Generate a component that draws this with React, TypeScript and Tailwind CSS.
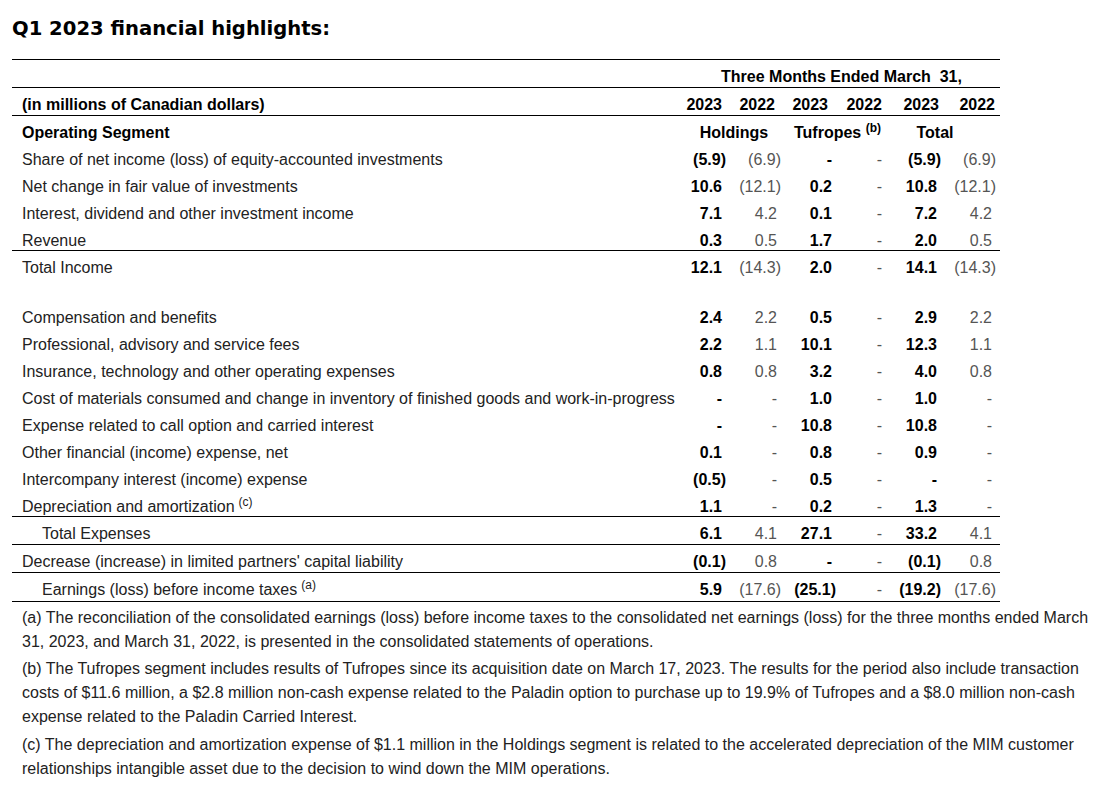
import React from "react";

type RowType = {
    label: string;
    sup?: string;
    indent?: boolean;
    vals: string[];
    cls: string;
};

const grid = "grid grid-cols-[671px_47px_55px_55px_50px_55px_55px] pt-[5px]";

const rows: RowType[] = [
    { label: "Share of net income (loss) of equity-accounted investments", vals: ["(5.9)", "(6.9)", "-", "-", "(5.9)", "(6.9)"], cls: "h-[27px]" },
    { label: "Net change in fair value of investments", vals: ["10.6", "(12.1)", "0.2", "-", "10.8", "(12.1)"], cls: "h-[27px]" },
    { label: "Interest, dividend and other investment income", vals: ["7.1", "4.2", "0.1", "-", "7.2", "4.2"], cls: "h-[27px]" },
    { label: "Revenue", vals: ["0.3", "0.5", "1.7", "-", "2.0", "0.5"], cls: "h-[27px] border-b border-black" },
    { label: "Total Income", vals: ["12.1", "(14.3)", "2.0", "-", "14.1", "(14.3)"], cls: "h-[28px] mb-[22px]" },
    { label: "Compensation and benefits", vals: ["2.4", "2.2", "0.5", "-", "2.9", "2.2"], cls: "h-[27px]" },
    { label: "Professional, advisory and service fees", vals: ["2.2", "1.1", "10.1", "-", "12.3", "1.1"], cls: "h-[27px]" },
    { label: "Insurance, technology and other operating expenses", vals: ["0.8", "0.8", "3.2", "-", "4.0", "0.8"], cls: "h-[27px]" },
    { label: "Cost of materials consumed and change in inventory of finished goods and work-in-progress", vals: ["-", "-", "1.0", "-", "1.0", "-"], cls: "h-[27px]" },
    { label: "Expense related to call option and carried interest", vals: ["-", "-", "10.8", "-", "10.8", "-"], cls: "h-[27px]" },
    { label: "Other financial (income) expense, net", vals: ["0.1", "-", "0.8", "-", "0.9", "-"], cls: "h-[27px]" },
    { label: "Intercompany interest (income) expense", vals: ["(0.5)", "-", "0.5", "-", "-", "-"], cls: "h-[27px]" },
    { label: "Depreciation and amortization", sup: "(c)", vals: ["1.1", "-", "0.2", "-", "1.3", "-"], cls: "h-[27px] border-b border-black" },
    { label: "Total Expenses", indent: true, vals: ["6.1", "4.1", "27.1", "-", "33.2", "4.1"], cls: "h-[28px] border-b border-black" },
    { label: "Decrease (increase) in limited partners' capital liability", vals: ["(0.1)", "0.8", "-", "-", "(0.1)", "0.8"], cls: "h-[28px] border-b border-black" },
    { label: "Earnings (loss) before income taxes", sup: "(a)", indent: true, vals: ["5.9", "(17.6)", "(25.1)", "-", "(19.2)", "(17.6)"], cls: "h-[29px] border-b border-black" },
];

const years = [
    { y: "2023", pr: "pr-[8px]" },
    { y: "2022", pr: "pr-[10px]" },
    { y: "2023", pr: "pr-[12px]" },
    { y: "2022", pr: "pr-[8px]" },
    { y: "2023", pr: "pr-[6px]" },
    { y: "2022", pr: "pr-[5px]" },
];

const Value: React.FC<{ v: string; i: number }> = ({ v, i }) => {
    const bold = i % 2 === 0;
    const paren = v.endsWith(")");
    return (
        <div
            className={`flex items-center justify-end pr-[4px] ${
                bold ? "font-bold text-black" : "text-[#555]"
            }`}
        >
            <span className={paren ? "" : "pr-[4px]"}>{v}</span>
        </div>
    );
};

const App: React.FC = () => {
    return (
        <div className="min-h-screen bg-white font-['Liberation_Sans',Arial,sans-serif] text-[16px] text-[#222]">
            <div className="h-[59px] pl-[12px] pt-[15px]">
                <h1 className="font-['DejaVu_Sans',Verdana,sans-serif] text-[19.6px] font-bold leading-[28px] text-black">
                    Q1 2023 financial highlights:
                </h1>
            </div>

            <div className="ml-[12px] w-[988px]">
                <div className={`${grid} h-[29px] border-y border-black`}>
                    <div />
                    <div className="col-span-6 flex items-center justify-center font-bold text-black">
                        Three Months Ended March&nbsp; 31,
                    </div>
                </div>
                <div className={`${grid} h-[28px] border-b border-black font-bold text-black`}>
                    <div className="flex items-center pl-[10px]">(in millions of Canadian dollars)</div>
                    {years.map((item, key) => (
                        <div className={`flex items-center justify-end ${item.pr}`} key={key}>
                            {item.y}
                        </div>
                    ))}
                </div>
                <div className={`${grid} h-[27px] font-bold text-black`}>
                    <div className="flex items-center pl-[10px]">Operating Segment</div>
                    <div className="col-span-2 flex items-center justify-center">Holdings</div>
                    <div className="col-span-2 flex items-center justify-center">
                        <span>
                            Tufropes <sup className="text-[12px] font-bold">(b)</sup>
                        </span>
                    </div>
                    <div className="col-span-2 flex items-center justify-center pr-[20px]">Total</div>
                </div>

                {rows.map((row, key) => (
                    <div className={`${grid} ${row.cls}`} key={key}>
                        <div className={`flex items-center ${row.indent ? "pl-[30px]" : "pl-[10px]"}`}>
                            <span>
                                {row.label}
                                {row.sup && <sup className="ml-[4px] text-[12px]">{row.sup}</sup>}
                            </span>
                        </div>
                        {row.vals.map((v, i) => (
                            <Value v={v} i={i} key={i} />
                        ))}
                    </div>
                ))}
            </div>

            <div className="pl-[22px] pr-[12px] pt-[4px] leading-[24px] text-[#222]">
                <p>
                    (a) The reconciliation of the consolidated earnings (loss) before income taxes to the consolidated net earnings (loss) for the three months ended March 31, 2023, and March 31, 2022, is presented in the consolidated statements of operations.
                </p>
                <p className="mt-[3px]">
                    (b) The Tufropes segment includes results of Tufropes since its acquisition date on March 17, 2023. The results for the period also include transaction costs of $11.6 million, a $2.8 million non-cash expense related to the Paladin option to purchase up to 19.9% of Tufropes and a $8.0 million non-cash expense related to the Paladin Carried Interest.
                </p>
                <p className="mt-[4px]">
                    (c) The depreciation and amortization expense of $1.1 million in the Holdings segment is related to the accelerated depreciation of the MIM customer relationships intangible asset due to the decision to wind down the MIM operations.
                </p>
            </div>
        </div>
    );
};

export default App;
